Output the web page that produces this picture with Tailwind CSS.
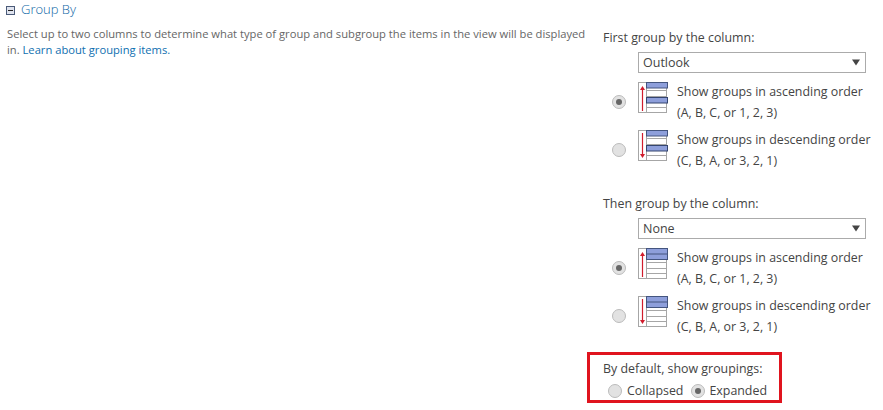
<!DOCTYPE html>
<html><head><meta charset="utf-8"><script src="https://cdn.jsdelivr.net/npm/@tailwindcss/browser@4"></script></head>
<body class="bg-white">
<svg class="hidden"><defs>
<g id="a"><rect x="0.5" y="0.5" width="28" height="30" fill="#fff" stroke="#a6a6a6"/><path d="M8 8.5h21M8 14.5h21M8 20.5h21M8 25.5h21M8.500 1v29" stroke="#a6a6a6" fill="none"/></g>
</defs></svg>
<div class="w-[883px] h-[410px] overflow-hidden flex font-['Open_Sans','Noto_Sans',sans-serif] text-[#444]">
<div class="w-[603px] pl-[7px] pt-[1px]">
<div class="flex items-center gap-[6px] h-[18px]">
<svg width="9" height="9" viewBox="0 0 9 9" class="ml-[-1px]"><rect x="0.500" y="0.500" width="8" height="8" fill="#dfe3ee" stroke="#4a5a78"/><path d="M2 4.500h5" stroke="#222"/></svg>
<span class="text-[13px] font-light text-[#0b65a5]">Group By</span>
</div>
<p class="mt-[7px] text-[11.200px] leading-[16px] w-[585px] text-[#666]">Select up to two columns to determine what type of group and subgroup the items in the view will be displayed in. <span class="text-[#0f6fb0]">Learn about grouping items.</span></p>
</div>
<div class="w-[280px] pt-[29px] text-[12.400px] leading-[18px]">
<div>First group by the column:</div>
<div class="ml-[35px] mt-[5px] w-[228px] h-[21px] border border-[#ababab] flex items-center justify-between pl-[4px] pr-[5px]"><span class="text-[12.500px]">Outlook</span><svg width="8" height="7" viewBox="0 0 9 7"><path d="M0 0h9L4.500 7z" fill="#444"/></svg></div>
<div class="mt-[9px] flex flex-col gap-[16px]">
<div class="flex h-[32px]">
<span class="ml-[9px] mt-[13px] w-[14px] h-[14px] rounded-full border border-[#bbb] bg-[#e2e2e2] flex items-center justify-center"><span class="w-[6px] h-[6px] rounded-full bg-[#666]"></span></span>
<svg width="30" height="32" viewBox="0 0 30 32" class="ml-[12px]"><use href="#a"/><rect x="8.500" y="0.500" width="21" height="5.500" fill="#8e9fdb" stroke="#44557f"/><rect x="8.500" y="15.500" width="21" height="5.500" fill="#8e9fdb" stroke="#34456f"/><path d="M4.500 29V6" stroke="#d01c2c" stroke-width="1.200"/><path d="M4.500 4l-2.500 4h5z" fill="#d01c2c"/></svg>
<div class="ml-[9px] -mt-[1px] leading-[21px]">Show groups in ascending order<br>(A, B, C, or 1, 2, 3)</div>
</div>
<div class="flex h-[32px]">
<span class="ml-[9px] mt-[13px] w-[14px] h-[14px] rounded-full border border-[#bbb] bg-[#e2e2e2]"></span>
<svg width="30" height="32" viewBox="0 0 30 32" class="ml-[12px]"><use href="#a"/><rect x="8.500" y="0.500" width="21" height="5.500" fill="#8e9fdb" stroke="#44557f"/><rect x="8.500" y="15.500" width="21" height="5.500" fill="#8e9fdb" stroke="#34456f"/><path d="M4.500 3v23" stroke="#d01c2c" stroke-width="1.200"/><path d="M4.500 28l-2.500-4h5z" fill="#d01c2c"/></svg>
<div class="ml-[9px] -mt-[1px] leading-[21px]">Show groups in descending order<br>(C, B, A, or 3, 2, 1)</div>
</div>
</div>
<div class="mt-[33px]">Then group by the column:</div>
<div class="ml-[35px] mt-[5px] w-[228px] h-[21px] border border-[#ababab] flex items-center justify-between pl-[4px] pr-[5px]"><span class="text-[12.500px]">None</span><svg width="8" height="7" viewBox="0 0 9 7"><path d="M0 0h9L4.500 7z" fill="#444"/></svg></div>
<div class="mt-[9px] flex flex-col gap-[16px]">
<div class="flex h-[32px]">
<span class="ml-[9px] mt-[13px] w-[14px] h-[14px] rounded-full border border-[#bbb] bg-[#e2e2e2] flex items-center justify-center"><span class="w-[6px] h-[6px] rounded-full bg-[#666]"></span></span>
<svg width="30" height="32" viewBox="0 0 30 32" class="ml-[12px]"><use href="#a"/><rect x="8.500" y="0.500" width="21" height="11" fill="#8e9fdb" stroke="#44557f"/><path d="M9 6h20" stroke="#44557f"/><path d="M4.500 29V6" stroke="#d01c2c" stroke-width="1.200"/><path d="M4.500 4l-2.500 4h5z" fill="#d01c2c"/></svg>
<div class="ml-[9px] -mt-[1px] leading-[21px]">Show groups in ascending order<br>(A, B, C, or 1, 2, 3)</div>
</div>
<div class="flex h-[32px]">
<span class="ml-[9px] mt-[13px] w-[14px] h-[14px] rounded-full border border-[#bbb] bg-[#e2e2e2]"></span>
<svg width="30" height="32" viewBox="0 0 30 32" class="ml-[12px]"><use href="#a"/><rect x="8.500" y="0.500" width="21" height="11" fill="#8e9fdb" stroke="#44557f"/><path d="M9 6h20" stroke="#44557f"/><path d="M4.500 3v23" stroke="#d01c2c" stroke-width="1.200"/><path d="M4.500 28l-2.500-4h5z" fill="#d01c2c"/></svg>
<div class="ml-[9px] -mt-[1px] leading-[21px]">Show groups in descending order<br>(C, B, A, or 3, 2, 1)</div>
</div>
</div>
<div class="relative mt-[32px]">
<div class="absolute left-[-16px] top-[-8px] w-[195px] h-[51px] border-[3px] border-[#e0141e]"></div>
<div>By default, show groupings:</div>
<div class="flex items-center mt-[4px] ml-[5px]">
<span class="w-[14px] h-[14px] rounded-full border border-[#bbb] bg-[#e2e2e2]"></span><span class="ml-[5px]">Collapsed</span>
<span class="ml-[8px] w-[14px] h-[14px] rounded-full border border-[#bbb] bg-[#e2e2e2] flex items-center justify-center"><span class="w-[6px] h-[6px] rounded-full bg-[#666]"></span></span><span class="ml-[4px]">Expanded</span>
</div>
</div>
</div>
</div>
</body></html>
